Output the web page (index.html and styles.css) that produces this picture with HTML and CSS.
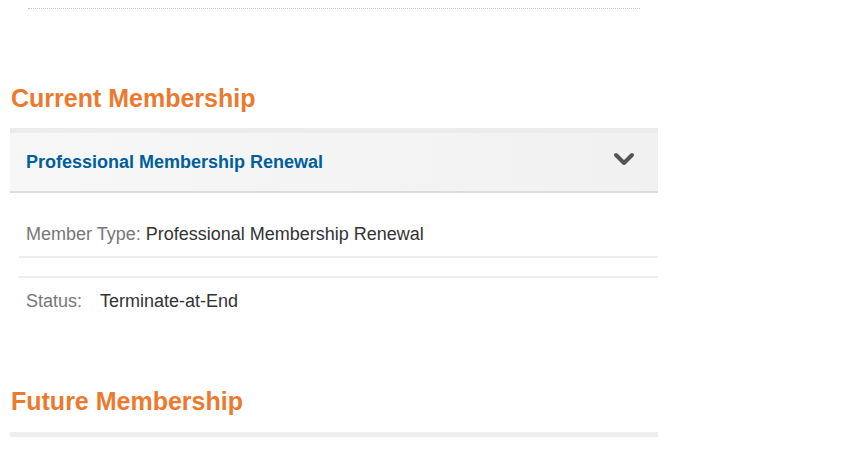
FILE: index.html
```html
<!DOCTYPE html>
<html lang="en">
<head>
  <meta charset="UTF-8">
  <meta name="viewport" content="width=device-width, initial-scale=1.0">
  <title>Membership</title>
  <link rel="stylesheet" href="styles.css">
</head>
<body>
  <div id="page">
    <div class="dotted-rule"></div>

    <h2 class="section-title">Current Membership</h2>
    <div class="accordion">
      <div class="accordion-head">
        <span class="accordion-title">Professional Membership Renewal</span>
        <svg class="chevron" width="22" height="14" viewBox="0 0 22 14">
          <polyline points="3,3 11,11 19,3" fill="none" stroke="#555" stroke-width="4" stroke-linecap="round" stroke-linejoin="round"/>
        </svg>
      </div>
      <div class="accordion-body">
        <div class="info-row first">
          <span class="label">Member Type:</span> <span class="value">Professional Membership Renewal</span>
        </div>
        <div class="info-row">
          <span class="label status-label">Status:</span><span class="value">Terminate-at-End</span>
        </div>
      </div>
    </div>

    <h2 class="section-title future">Future Membership</h2>
    <div class="empty-bar"></div>
  </div>
</body>
</html>
```

FILE: styles.css
```css
body {
  margin: 0;
  background: #fff;
  font-family: 'Liberation Sans', Arial, sans-serif;
}

#page {
  width: 648px;
  padding: 8px 0 0 10px;
}

.dotted-rule {
  margin-left: 18px;
  width: 612px;
  border-top: 1px dotted #c8c8c8;
}

.section-title {
  margin: 75px 0 15px 1px;
  color: #ec7a2e;
  font-size: 25px;
  font-weight: bold;
  line-height: 29px;
}

.section-title.future {
  margin-top: 76px;
  margin-bottom: 16px;
}

.accordion-head {
  display: flex;
  align-items: center;
  justify-content: space-between;
  height: 58px;
  padding: 0 23px 0 16px;
  border-top: 5px solid #ececec;
  border-bottom: 2px solid #dcdcdc;
  background: linear-gradient(to right, #f7f7f7, #f1f1f1);
}

.accordion-title {
  color: #005f9b;
  font-size: 18px;
  font-weight: bold;
}

.chevron {
  display: block;
  margin-top: -6px;
}

.accordion-body {
  padding-left: 9px;
}

.info-row {
  padding: 0 7px;
  font-size: 18px;
  line-height: 20px;
}

.info-row.first {
  padding-top: 31px;
  padding-bottom: 12px;
  border-bottom: 2px solid #eeeeee;
  margin-bottom: 18px;
}

.info-row + .info-row {
  border-top: 2px solid #eeeeee;
  padding-top: 13px;
}

.label {
  color: #777;
}

.value {
  color: #333;
}

.status-label {
  display: inline-block;
  width: 74px;
}

.empty-bar {
  height: 5px;
  background: #eeeeee;
}
```
